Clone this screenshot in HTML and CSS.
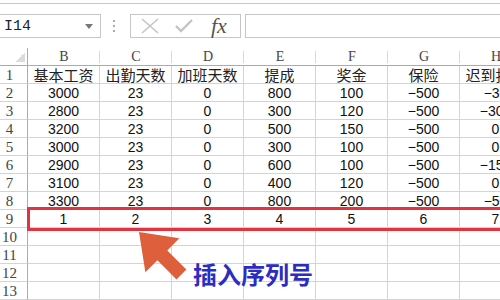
FILE: index.html
```html
<!DOCTYPE html>
<html lang="zh-CN">
  <head>
    <meta charset="UTF-8" />
    <title>插入序列号</title>
    <link rel="stylesheet" href="styles.css">
  </head>
  <body>
    <div class="sheet">
      <div class="top-line"></div>

      <div class="formula-bar">
        <div class="name-box">
          <span>I14</span>
          <svg class="caret" width="8" height="5" viewBox="0 0 8 5"><path d="M0 0H8L4 5Z" fill="#777"/></svg>
        </div>
        <svg class="grip" width="3" height="13" viewBox="0 0 3 13">
          <rect x="0" y="0" width="2" height="2" fill="#aaa"/>
          <rect x="0" y="5" width="2" height="2" fill="#aaa"/>
          <rect x="0" y="10" width="2" height="2" fill="#aaa"/>
        </svg>
        <div class="fx-box">
          <svg width="18" height="16" viewBox="0 0 18 16"><path d="M1 1L17 15M17 1L1 15" stroke="#c4c4c4" stroke-width="1.6" fill="none"/></svg>
          <svg width="18" height="14" viewBox="0 0 18 14"><path d="M1 7L6 12L17 1" stroke="#c4c4c4" stroke-width="2.4" fill="none"/></svg>
          <span class="fx">fx</span>
        </div>
        <div class="formula-input"></div>
      </div>

      <div class="grid">
        <div class="hd corner"></div>
        <div class="hd">B</div><div class="hd">C</div><div class="hd">D</div><div class="hd">E</div><div class="hd">F</div><div class="hd">G</div><div class="hd">H</div>

        <div class="rh">1</div>
        <div class="c cn">基本工资</div><div class="c cn">出勤天数</div><div class="c cn">加班天数</div><div class="c cn">提成</div><div class="c cn">奖金</div><div class="c cn">保险</div><div class="c cn">迟到扣款</div>

        <div class="rh">2</div>
        <div class="c">3000</div><div class="c">23</div><div class="c">0</div><div class="c">800</div><div class="c">100</div><div class="c">−500</div><div class="c">−30</div>

        <div class="rh">3</div>
        <div class="c">2800</div><div class="c">23</div><div class="c">0</div><div class="c">300</div><div class="c">120</div><div class="c">−500</div><div class="c">−300</div>

        <div class="rh">4</div>
        <div class="c">3200</div><div class="c">23</div><div class="c">0</div><div class="c">500</div><div class="c">150</div><div class="c">−500</div><div class="c">0</div>

        <div class="rh">5</div>
        <div class="c">3000</div><div class="c">23</div><div class="c">0</div><div class="c">300</div><div class="c">100</div><div class="c">−500</div><div class="c">0</div>

        <div class="rh">6</div>
        <div class="c">2900</div><div class="c">23</div><div class="c">0</div><div class="c">600</div><div class="c">100</div><div class="c">−500</div><div class="c">−150</div>

        <div class="rh">7</div>
        <div class="c">3100</div><div class="c">23</div><div class="c">0</div><div class="c">400</div><div class="c">120</div><div class="c">−500</div><div class="c">0</div>

        <div class="rh">8</div>
        <div class="c">3300</div><div class="c">23</div><div class="c">0</div><div class="c">800</div><div class="c">200</div><div class="c">−500</div><div class="c">−50</div>

        <div class="rh">9</div>
        <div class="c">1</div><div class="c">2</div><div class="c">3</div><div class="c">4</div><div class="c">5</div><div class="c">6</div><div class="c">7</div>

        <div class="rh">10</div>
        <div class="c"></div><div class="c"></div><div class="c"></div><div class="c"></div><div class="c"></div><div class="c"></div><div class="c"></div>

        <div class="rh">11</div>
        <div class="c"></div><div class="c"></div><div class="c"></div><div class="c"></div><div class="c"></div><div class="c"></div><div class="c"></div>

        <div class="rh">12</div>
        <div class="c"></div><div class="c"></div><div class="c"></div><div class="c"></div><div class="c"></div><div class="c"></div><div class="c"></div>

        <div class="rh">13</div>
        <div class="c"></div><div class="c"></div><div class="c"></div><div class="c"></div><div class="c"></div><div class="c"></div><div class="c"></div>
      </div>

      <!-- annotations drawn over the sheet -->
      <div class="highlight"></div>
      <svg class="arrow" width="500" height="300" viewBox="0 0 500 300">
        <polygon points="0,0 33,-24 33,-7 60,-7 60,7 33,7 33,24" fill="#de5f3c" transform="translate(139 232) rotate(45)"/>
      </svg>
      <div class="note">插入序列号</div>
    </div>
  </body>
</html>
```

FILE: styles.css
```css
body {
  margin: 0;
  background: #fff;
}
.sheet {
  position: relative;
  width: 500px;
  height: 300px;
  overflow: hidden;
  background: #fff;
}
.top-line {
  margin-top: 3px;
  height: 1px;
  background: #c8c8c8;
}
.formula-bar {
  display: flex;
  align-items: center;
  margin-top: 10px;
  height: 24px;
}
.name-box {
  box-sizing: border-box;
  width: 101px;
  height: 24px;
  border: 1px solid #c6c6c6;
  border-left: none;
  display: flex;
  align-items: center;
  justify-content: space-between;
  padding: 0 7px 0 4px;
  font-family: "Liberation Mono", monospace;
  font-size: 15px;
  color: #222;
}
.grip {
  margin-left: 12px;
}
.fx-box {
  box-sizing: border-box;
  margin-left: 14px;
  width: 111px;
  height: 24px;
  border: 1px solid #c6c6c6;
  display: flex;
  align-items: center;
  gap: 16px;
  padding-left: 10px;
}
.fx {
  font-family: "Liberation Serif", serif;
  font-style: italic;
  font-size: 22px;
  color: #555;
  line-height: 20px;
  margin-left: 2px;
}
.formula-input {
  box-sizing: border-box;
  flex: 1;
  margin-left: 4px;
  height: 24px;
  border: 1px solid #c6c6c6;
  border-right: none;
}
.grid {
  margin-top: 10px;
  display: grid;
  grid-template-columns: 28px repeat(7, 72px);
  grid-auto-rows: 18px;
  width: 532px;
}
.hd {
  box-sizing: border-box;
  border-bottom: 1px solid #ababab;
  background: linear-gradient(#d8d8d8, #d8d8d8) right center / 1px 12px no-repeat;
  text-align: center;
  font-family: "Liberation Serif", serif;
  font-size: 14px;
  line-height: 17px;
  color: #444;
}
.corner {
  border-right: 1px solid #ababab;
  background: linear-gradient(135deg, transparent 50%, #dcdcdc 50%) right 2px bottom 3px / 10px 10px no-repeat;
}
.rh {
  box-sizing: border-box;
  border-right: 1px solid #ababab;
  border-bottom: 1px solid #d4d4d4;
  padding-right: 8px;
  text-align: center;
  font-family: "Liberation Serif", serif;
  font-size: 15px;
  line-height: 18px;
  color: #444;
}
.c {
  box-sizing: border-box;
  border-right: 1px solid #d4d4d4;
  border-bottom: 1px solid #d4d4d4;
  text-align: center;
  white-space: nowrap;
  font-family: "Liberation Sans", sans-serif;
  font-size: 14px;
  line-height: 18px;
  color: #111;
}
.cn {
  font-family: "Noto Sans CJK SC", sans-serif;
  font-size: 15px;
  line-height: 17px;
  color: #222;
}
.highlight {
  position: absolute;
  left: 27px;
  top: 207px;
  width: 490px;
  height: 24px;
  box-sizing: border-box;
  border: 3px solid #e2343f;
}
.arrow {
  position: absolute;
  left: 0;
  top: 0;
}
.note {
  position: absolute;
  left: 193px;
  top: 261px;
  font-family: "Noto Sans CJK SC", sans-serif;
  font-weight: bold;
  font-size: 24px;
  line-height: 26px;
  color: #2c2cc0;
}
```
